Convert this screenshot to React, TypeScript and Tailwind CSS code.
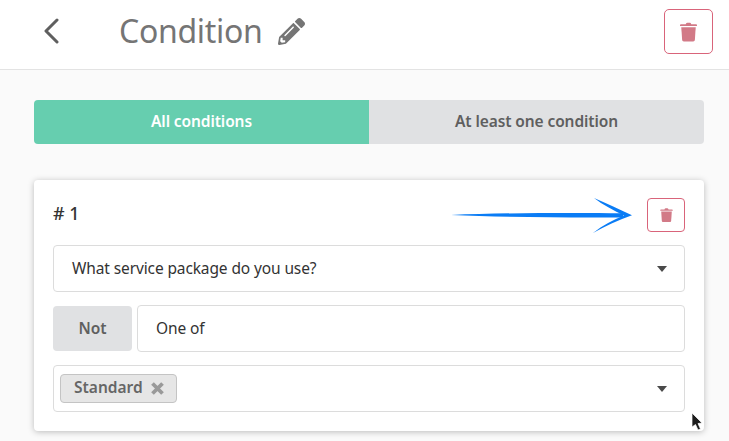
// Condition editor screen
function TrashIcon({ className }: { className: string }) {
  return (
    <svg viewBox="0 0 16 18" className={className} fill="currentColor">
      <path d="M5.6 1.2 C5.8.5 6.3.2 6.9.2 H9.1 C9.7.2 10.2.5 10.4 1.2 L10.6 1.8 H15.2 C15.7 1.8 16 2.1 16 2.6 V3.4 H0 V2.6 C0 2.1.3 1.8.8 1.8 H5.4 Z" />
      <path d="M1.2 4.6 H14.8 L14 16.4 C13.9 17.3 13.3 18 12.4 18 H3.6 C2.7 18 2.1 17.3 2 16.4 Z" />
    </svg>
  );
}

function Caret() {
  return (
    <svg viewBox="0 0 10 6" className="h-[6px] w-[10px] text-[#4a4a4a]" fill="currentColor">
      <path d="M0 0 H10 L5 6 Z" />
    </svg>
  );
}

function Arrow() {
  return (
    <svg viewBox="0 0 184 36" className="h-[36px] w-[184px]">
      <path d="M0 17 C50 14.8 120 14.6 172 15.2 L172 19.4 C120 19.8 50 19.2 0 17 Z" fill="#0a7cf5" />
      <path d="M143 0 C155 5 168 11 181 17.3 C168 22 154 28 142 35 C152 27 162 22 173 17.5 C162 12 152 7 143 0 Z" fill="#0a7cf5" />
    </svg>
  );
}

export default function App() {
  return (
    <div className="h-[441px] w-[729px] overflow-hidden bg-[#fafafa] font-['Noto_Sans',sans-serif]">
      {/* Header */}
      <div className="flex h-[70px] items-center border-b border-[#e3e3e3] bg-white pb-[6px] pl-[44px] pr-[16px]">
        <svg viewBox="0 0 15 26" className="mb-[2px] h-[26px] w-[15px] text-[#5f5f5f]" fill="none" stroke="currentColor" strokeWidth="3" strokeLinecap="round" strokeLinejoin="round">
          <path d="M13 2 L2 13 L13 24" />
        </svg>
        <h1 className="mb-[1px] ml-[60px] text-[32px] leading-none font-normal tracking-[-0.3px] text-[#757575]">Condition</h1>
        <svg viewBox="0 0 512 512" className="ml-[15px] h-[27px] w-[27px] text-[#757575]" fill="currentColor">
          <path d="M497.9 142.1l-46.1 46.1c-4.7 4.7-12.3 4.7-17 0l-111-111c-4.7-4.7-4.7-12.3 0-17l46.1-46.1c18.7-18.7 49.1-18.7 67.9 0l60.1 60.1c18.8 18.7 18.8 49.1 0 67.9zM284.2 99.8L21.6 362.4.4 483.9c-2.9 16.4 11.4 30.6 27.8 27.8l121.5-21.3 262.6-262.6c4.7-4.7 4.7-12.3 0-17l-111-111c-4.8-4.7-12.4-4.7-17.1 0zM124.1 339.9c-5.5-5.5-5.5-14.3 0-19.8l154-154c5.5-5.5 14.3-5.5 19.8 0s5.5 14.3 0 19.8l-154 154c-5.5 5.5-14.3 5.5-19.8 0zM88 424h48v36.3l-64.5 11.3-31.1-31.1L51.7 376H88v48z" />
        </svg>
        <button className="ml-auto flex h-[45px] w-[49px] items-center justify-center rounded-[5px] border border-[#d9647a] bg-white text-[#d27a87]">
          <TrashIcon className="h-[20px] w-[17px]" />
        </button>
      </div>

      <div className="pl-[34px] pr-[25px] pt-[30px]">
        {/* Tabs */}
        <div className="flex h-[44px] overflow-hidden rounded-[4px] text-[15.5px] font-semibold tracking-[-0.1px]">
          <div className="flex w-[335px] items-center justify-center bg-[#66ceaf] text-white">All conditions</div>
          <div className="flex flex-1 items-center justify-center bg-[#e0e1e3] text-[#5f5f5f]">At least one condition</div>
        </div>

        {/* Condition card */}
        <div className="mt-[36px] h-[251px] rounded-[4px] bg-white px-[19px] shadow-[0_1px_6px_rgba(0,0,0,0.25)]">
          <div className="flex h-[65px] items-center justify-between pt-[4px]">
            <span className="pb-[2px] text-[18px] font-medium text-[#333]"># 1</span>
            <div className="relative">
              <div className="absolute right-[50px] top-0">
                <Arrow />
              </div>
              <button className="flex h-[34px] w-[38px] items-center justify-center rounded-[4px] border border-[#d9647a] bg-white text-[#d27a87]">
                <TrashIcon className="h-[14px] w-[13px]" />
              </button>
            </div>
          </div>

          <div className="flex h-[47px] items-center justify-between rounded-[4px] border border-[#dcdcdc] pl-[18px] pr-[17px] text-[15.5px] tracking-[-0.12px] text-[#333]">
            <span>What service package do you use?</span>
            <Caret />
          </div>

          <div className="mt-[13px] flex h-[47px] gap-[5px]">
            <div className="my-px flex w-[79px] items-center justify-center rounded-[4px] bg-[#e0e1e3] text-[15.5px] font-semibold text-[#5f5f5f]">Not</div>
            <div className="flex flex-1 items-center rounded-[4px] border border-[#dcdcdc] pl-[18px] text-[15.5px] tracking-[-0.12px] text-[#333]">One of</div>
          </div>

          <div className="mt-[13px] flex h-[47px] items-center justify-between rounded-[4px] border border-[#dcdcdc] pl-[6px] pr-[17px]">
            <div className="flex h-[29px] w-[117px] items-center gap-[8px] rounded-[4px] border border-[#c4c4c4] bg-[#e6e6e6] pb-[1px] pl-[13px] text-[15.5px] font-semibold text-[#666]">
              Standard
              <svg viewBox="0 0 13 13" className="h-[13px] w-[13px] text-[#999]" fill="none" stroke="currentColor" strokeWidth="3.8" strokeLinecap="butt">
                <path d="M1.5 1.5 L11.5 11.5 M11.5 1.5 L1.5 11.5" />
              </svg>
            </div>
            <Caret />
          </div>
        </div>
      </div>

      {/* Mouse pointer */}
      <svg viewBox="0 0 12 18" className="absolute left-[691px] top-[413px] h-[18px] w-[12px]">
        <path d="M1 0 L11 10 L7 10.5 L9.5 16 L7 17 L4.5 11.5 L1 14 Z" fill="#1c1c1c" stroke="#fff" strokeWidth="0.7" />
      </svg>
    </div>
  );
}
